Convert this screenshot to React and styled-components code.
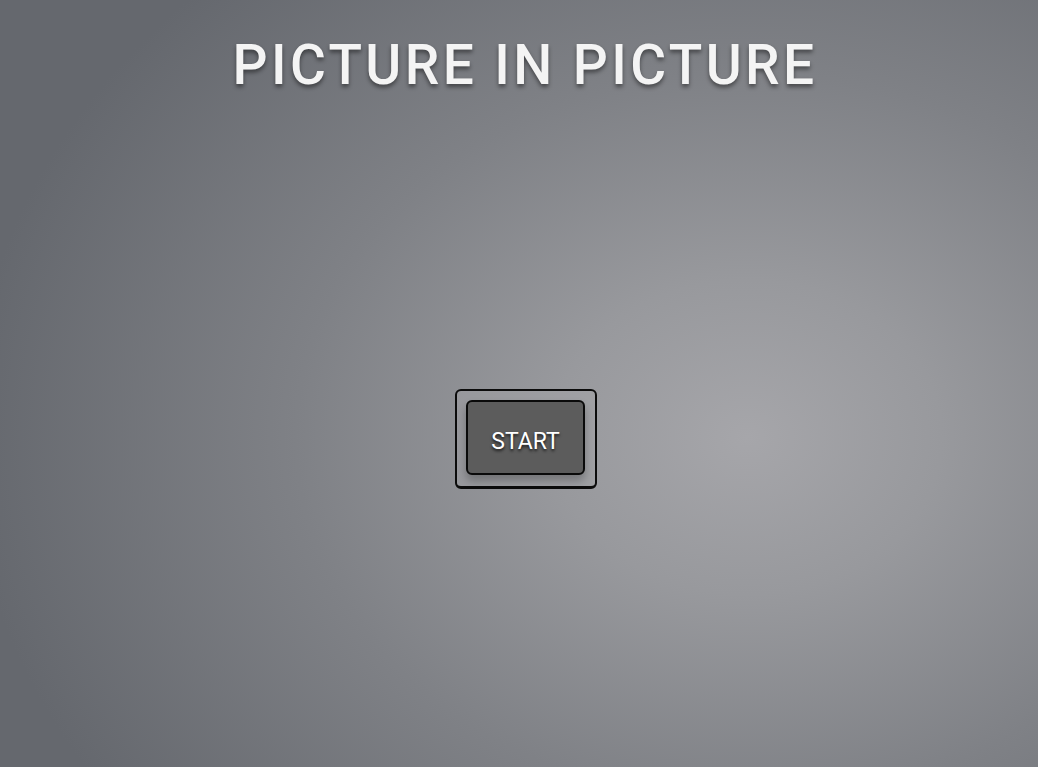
import React from 'react';
import styled, { createGlobalStyle } from 'styled-components';

const GlobalStyle = createGlobalStyle`
  html, body {
    margin: 0;
    padding: 0;
    height: 100%;
  }

  body {
    font-family: Roboto, 'Liberation Sans', sans-serif;
    background: radial-gradient(
      ellipse 75% 82% at 72% 57%,
      #a6a6aa 0%,
      #98999d 25%,
      #7f8186 58%,
      #65686e 100%
    );
    background-color: #64676d;
    overflow: hidden;
  }

  #root {
    height: 100%;
  }
`;

const Page = styled.main`
  height: 100vh;
  display: flex;
  flex-direction: column;
  align-items: center;
`;

const Title = styled.h1`
  margin: 33px 0 0 12px;
  font-size: 55px;
  font-weight: 500;
  letter-spacing: 3.4px;
  color: #f4f4f4;
  text-shadow: 0 3px 4px rgba(0, 0, 0, 0.45);
`;

const Stage = styled.div`
  display: flex;
  justify-content: center;
  padding-top: 292px;
  padding-left: 14px;
`;

const Frame = styled.div`
  padding: 9px 10px 11px 9px;
  border: 2px solid #0c0c0c;
  border-bottom-width: 3px;
  border-radius: 6px;
  background: rgba(170, 170, 172, 0.35);
`;

const StartButton = styled.button`
  display: block;
  box-sizing: border-box;
  width: 119px;
  height: 75px;
  padding: 7px 0 0;
  border: 2px solid #0a0a0a;
  border-radius: 6px;
  background: #5c5c5c;
  color: #ffffff;
  font-family: Roboto, 'Liberation Sans', sans-serif;
  font-size: 23px;
  font-weight: 400;
  text-shadow: 0 2px 3px rgba(0, 0, 0, 0.75);
  box-shadow: 0 6px 8px rgba(0, 0, 0, 0.25);
  cursor: pointer;
`;

export default function App() {
  return (
    <>
      <GlobalStyle />
      <Page>
        <Title>PICTURE IN PICTURE</Title>
        <Stage>
          <Frame>
            <StartButton>START</StartButton>
          </Frame>
        </Stage>
      </Page>
    </>
  );
}
